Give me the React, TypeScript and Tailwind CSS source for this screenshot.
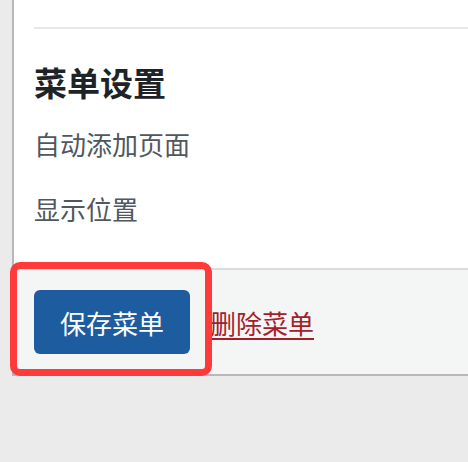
export default function App() {
  return (
    <div className="relative h-[462px] w-[468px] overflow-hidden bg-[#ebebeb] pl-3 font-['Noto_Sans_CJK_SC','Noto_Sans',sans-serif]">
      {/* Menu settings panel */}
      <div className="border-b-2 border-l-2 border-[#b8b8bc] bg-white">
        <div className="pb-[41px] pl-5 pt-[27px]">
          <div className="h-[2px] bg-[#e8e8e9]" />
          <h2 className="mt-[33px] text-[33px] font-bold leading-[40px] text-[#1d2327]">菜单设置</h2>
          <p className="mt-[24px] text-[26px] leading-[36px] text-[#50575e]">自动添加页面</p>
          <p className="mt-[29px] text-[26px] leading-[36px] text-[#50575e]">显示位置</p>
        </div>

        {/* Footer actions */}
        <div className="flex items-center gap-5 border-t-2 border-[#dcdcde] bg-[#f4f5f5] px-5 py-5">
          <button className="h-[64px] w-[156px] rounded-[6px] bg-[#1d5c9f] text-[26px] text-white">
            保存菜单
          </button>
          <a href="#" className="text-[26px] text-[#a3202a] underline underline-offset-4">
            删除菜单
          </a>
        </div>
      </div>

      {/* Highlight annotation */}
      <div className="absolute left-[10px] top-[262px] h-[114px] w-[202px] rounded-[10px] border-[7px] border-[#ff3a3a]" />
    </div>
  )
}
